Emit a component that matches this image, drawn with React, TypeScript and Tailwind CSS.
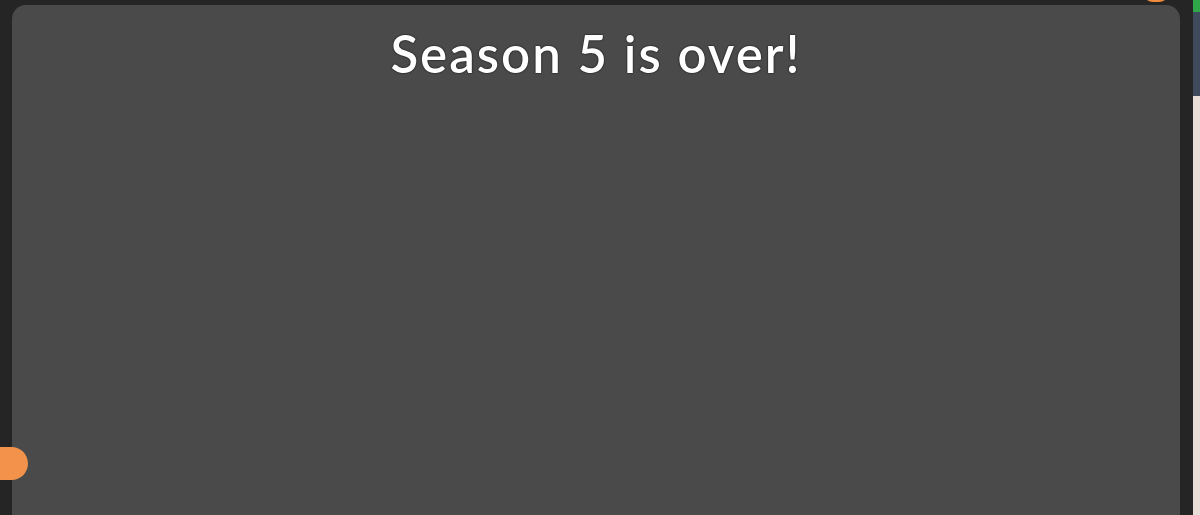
export default function App() {
  return (
    <div className="relative flex h-[515px] w-[1200px] overflow-hidden bg-[#252525] font-['Lato',sans-serif]">
      <div className="pl-[12px] pt-[5px]">
        <div className="flex h-[540px] w-[1168px] justify-center rounded-[14px] bg-[#4a4a4a] pt-[19px]">
          <h1 className="text-[51px] font-semibold leading-[60px] tracking-[2px] text-white [text-shadow:0_0_1px_#000,0_0_2px_#1a1a1a]">
            Season 5 is over!
          </h1>
        </div>
      </div>
      <div className="ml-[13px] flex w-[7px] flex-col">
        <div className="h-[12px] bg-[#2fa84a]" />
        <div className="h-[84px] bg-[#3f4b5c]" />
        <div className="flex-1 bg-[#e9ddd8]" />
      </div>

      {/* orange bits poking in from behind */}
      <div className="absolute left-[1143px] top-[-18px] h-[20px] w-[26px] rounded-full bg-[#f08a3c]" />
      <div className="absolute left-0 top-[447px] h-[33px] w-[28px] rounded-r-full bg-[#f3924a]" />
    </div>
  );
}
